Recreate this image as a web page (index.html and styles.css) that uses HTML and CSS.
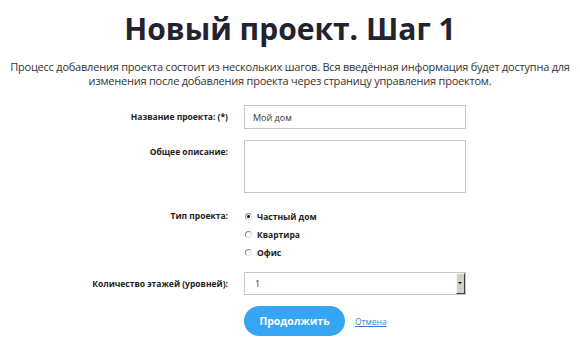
FILE: index.html
```html
<!DOCTYPE html>
<html lang="ru">
<head>
<meta charset="UTF-8" />
<title>Новый проект. Шаг 1</title>
<link rel="stylesheet" href="styles.css">
</head>
<body>

<h1 class="page-title">Новый проект. Шаг 1</h1>
<p class="intro">Процесс добавления проекта состоит из нескольких шагов. Вся введённая информация будет доступна для<br>изменения после добавления проекта через страницу управления проектом.</p>

<form class="project-form">
  <div class="form-row">
    <label class="field-label" for="name">Название проекта: (*)</label>
    <input class="text-input" id="name" type="text" value="Мой дом" />
  </div>

  <div class="form-row">
    <label class="field-label" for="desc">Общее описание:</label>
    <textarea class="text-area" id="desc"></textarea>
  </div>

  <div class="form-row">
    <span class="field-label">Тип проекта:</span>
    <div class="radio-group">
      <label class="radio-item"><input type="radio" name="type" checked /> Частный дом</label>
      <label class="radio-item"><input type="radio" name="type" /> Квартира</label>
      <label class="radio-item"><input type="radio" name="type" /> Офис</label>
    </div>
  </div>

  <div class="form-row">
    <label class="field-label" for="floors">Количество этажей (уровней):</label>
    <div class="select-wrap">
      <select class="select-input" id="floors">
        <option>1</option>
        <option>2</option>
        <option>3</option>
      </select>
      <span class="select-arrow"></span>
    </div>
  </div>

  <div class="form-row">
    <span></span>
    <div class="actions">
      <button type="button" class="submit-btn">Продолжить</button>
      <a href="#" class="cancel-link">Отмена</a>
    </div>
  </div>
</form>

</body>
</html>
```

FILE: styles.css
```css
body {
  font-family: "Open Sans", "Noto Sans", sans-serif;
  margin: 8px;
  background: #fff;
  color: #333;
}

.page-title {
  margin: 0;
  font-size: 30px;
  font-weight: 700;
  color: #23232f;
  text-align: center;
}

/* line break is fixed so the wrap matches the design */
.intro {
  margin: 11px -8px 0;
  font-size: 11px;
  letter-spacing: -0.22px;
  line-height: 13.5px;
  text-align: center;
  white-space: nowrap;
  color: #333;
}

.project-form {
  margin-top: 18px;
  display: flex;
  flex-direction: column;
  gap: 11px;
}

.form-row {
  display: grid;
  grid-template-columns: 220px 222px;
  column-gap: 16px;
  align-items: start;
}

.field-label {
  text-align: right;
  font-size: 8.5px;
  font-weight: 700;
  line-height: 12px;
  padding-top: 6px;
  color: #222;
}

.text-input,
.text-area,
.select-input {
  box-sizing: border-box;
  width: 222px;
  border: 1px solid #c6c6d0;
  font-family: "Open Sans", sans-serif;
  font-size: 9px;
  color: #333;
  padding: 0 8px;
  margin: 0;
  background: #fff;
  outline: none;
}

.text-input {
  height: 24px;
}

.text-area {
  height: 53px;
  resize: none;
  display: block;
}

.radio-group {
  display: flex;
  flex-direction: column;
  padding-top: 3px;
}

.radio-item {
  display: flex;
  align-items: center;
  gap: 5px;
  height: 18px;
  font-size: 8.5px;
  font-weight: 700;
  color: #222;
}

.radio-item input {
  appearance: none;
  width: 7px;
  height: 7px;
  margin: 0 0 0 1px;
  border: 1px solid #888;
  border-right-color: #ddd;
  border-bottom-color: #ddd;
  border-radius: 50%;
  box-sizing: border-box;
  background: #fff;
}

.radio-item input:checked {
  background: radial-gradient(circle, #222 0 1.3px, #fff 1.6px);
}

.select-wrap {
  position: relative;
  width: 222px;
}

.select-input {
  appearance: none;
  height: 23px;
  display: block;
  padding-left: 10px;
}

.select-arrow {
  position: absolute;
  top: 1px;
  right: 1px;
  width: 9px;
  height: 21px;
  background: #d4d0c8;
  border-top: 1px solid #f4f4f0;
  border-left: 1px solid #f4f4f0;
  border-right: 1px solid #404040;
  border-bottom: 1px solid #404040;
  box-sizing: border-box;
  pointer-events: none;
}

.select-arrow::after {
  content: "";
  position: absolute;
  left: 1px;
  top: 8px;
  border-left: 2px solid transparent;
  border-right: 2px solid transparent;
  border-top: 2px solid #000;
}

.actions {
  display: flex;
  align-items: center;
  gap: 10px;
}

.submit-btn {
  width: 101px;
  height: 30px;
  border: none;
  border-radius: 15px;
  background: #36a6f4;
  color: #fff;
  font-family: "Open Sans", sans-serif;
  font-size: 10.5px;
  font-weight: 700;
  cursor: pointer;
}

.cancel-link {
  font-size: 8.5px;
  color: #3a7fd5;
  text-decoration: underline;
}
```
